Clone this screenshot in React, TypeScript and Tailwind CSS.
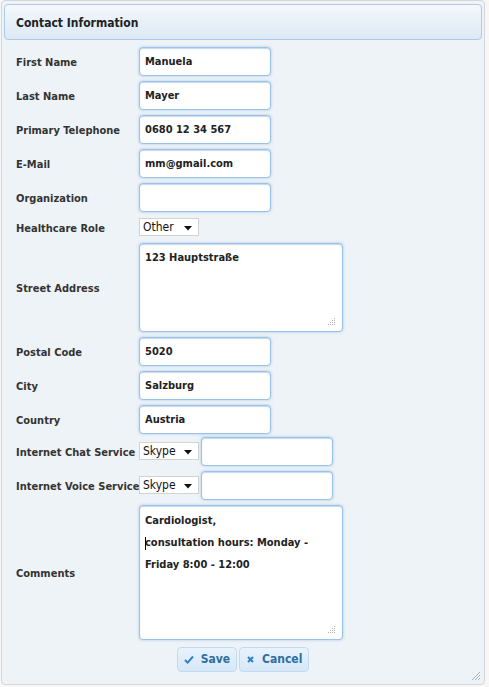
import React from 'react';

const font = {
  fontFamily: '"DejaVu Sans Condensed", "DejaVu Sans", "Liberation Sans", sans-serif',
  fontStretch: 'condensed',
};

const Grip = () => (
  <svg className="absolute bottom-[5px] right-[6px]" width="8" height="8" viewBox="0 0 8 8">
    <rect x="6" y="0" width="1" height="1" fill="#b5b5b5" />
    <rect x="4" y="2" width="1" height="1" fill="#b5b5b5" />
    <rect x="6" y="2" width="1" height="1" fill="#b5b5b5" />
    <rect x="2" y="4" width="1" height="1" fill="#b5b5b5" />
    <rect x="4" y="4" width="1" height="1" fill="#b5b5b5" />
    <rect x="6" y="4" width="1" height="1" fill="#b5b5b5" />
    <rect x="0" y="6" width="1" height="1" fill="#b5b5b5" />
    <rect x="2" y="6" width="1" height="1" fill="#b5b5b5" />
    <rect x="4" y="6" width="1" height="1" fill="#b5b5b5" />
    <rect x="6" y="6" width="1" height="1" fill="#b5b5b5" />
  </svg>
);

const field =
  'bg-white border border-[#9cc3e6] rounded-[4px] shadow-[0_0_3px_rgba(110,165,220,0.55),inset_0_1px_1px_rgba(90,150,210,0.35)]';

const TextInput = ({ value = '', w = 'w-[132px]' }: { value?: string; w?: string }) => (
  <div className={`${field} ${w} h-[29px] flex items-center px-[5px] pt-[2px] text-[11px] font-bold text-[#222]`}>
    {value}
  </div>
);

const Select = ({ value }: { value: string }) => (
  <div className="w-[60px] h-[18px] bg-white border border-[#d2d2d2] flex items-center justify-between pl-[3px] pr-[6px] text-[12px] text-[#111]">
    <span className="leading-none">{value}</span>
    <svg width="8" height="5" viewBox="0 0 8 5" className="mt-[3px]">
      <path d="M0 0h8L4 4.5z" fill="#111" />
    </svg>
  </div>
);

const Label = ({ children }: { children: React.ReactNode }) => (
  <div className="w-[123px] shrink-0 pt-[4px] text-[11px] font-bold text-[#333] whitespace-nowrap">{children}</div>
);

const Row = ({ label, children, cls = '' }: { label: string; children: React.ReactNode; cls?: string }) => (
  <div className={`flex items-center ${cls}`}>
    <Label>{label}</Label>
    {children}
  </div>
);

const btn =
  'h-[25px] px-[6px] flex items-center gap-[7px] rounded-[4px] border border-[#c2daef] bg-gradient-to-b from-[#e8f2fc] to-[#d6e8f8] text-[12px] font-bold text-[#2e6e9e]';

export default function App() {
  return (
    <div className="w-[489px] h-[687px] bg-[#f7f7f7] relative" style={font}>
      <div className="absolute left-[1px] top-0 w-[484px] h-[685px] bg-[#eef3f7] border border-[#d6d6d6] rounded-[4px] flex flex-col px-[2px] pt-[3px]">
        {/* Title bar */}
        <div className="h-[36px] rounded-[4px] border border-[#a9cbe8] bg-gradient-to-b from-[#f4f8fb] to-[#dce9f5] flex items-center pl-[11px] pt-[1px] text-[12px] font-bold text-[#222]">
          Contact Information
        </div>

        {/* Form */}
        <div className="flex flex-col pl-[12px] pt-[7px]">
          <div className="flex flex-col gap-[5px]">
            <Row label="First Name"><TextInput value="Manuela" /></Row>
            <Row label="Last Name"><TextInput value="Mayer" /></Row>
            <Row label="Primary Telephone"><TextInput value="0680 12 34 567" /></Row>
            <Row label="E-Mail"><TextInput value="mm@gmail.com" /></Row>
            <Row label="Organization"><TextInput /></Row>
          </div>
          <Row label="Healthcare Role" cls="mt-[5px]"><Select value="Other" /></Row>
          <Row label="Street Address" cls="mt-[5px]">
            <div className={`${field} relative w-[204px] h-[89px] px-[5px] pt-[6px] text-[11px] font-bold text-[#222]`}>
              123 Hauptstraße
              <Grip />
            </div>
          </Row>
          <div className="flex flex-col gap-[5px] mt-[5px]">
            <Row label="Postal Code"><TextInput value="5020" /></Row>
            <Row label="City"><TextInput value="Salzburg" /></Row>
            <Row label="Country"><TextInput value="Austria" /></Row>
            <Row label="Internet Chat Service" cls="mt-[-2px]">
              <Select value="Skype" />
              <div className="ml-[2px]"><TextInput /></div>
            </Row>
            <Row label="Internet Voice Service">
              <Select value="Skype" />
              <div className="ml-[2px]"><TextInput /></div>
            </Row>
            <Row label="Comments">
              <div className={`${field} relative w-[204px] h-[135px] px-[5px] pt-[4px] text-[11px] font-bold text-[#222] leading-[22px]`}>
                <div>Cardiologist,</div>
                <div className="relative">
                  <span className="absolute left-0 top-[5px] w-px h-[13px] bg-black" />
                  consultation hours: Monday -
                </div>
                <div>Friday 8:00 - 12:00</div>
                <Grip />
              </div>
            </Row>
          </div>
        </div>

        {/* Buttons */}
        <div className="flex justify-center gap-[2px] mt-[7px]">
          <button className={btn}>
            <svg width="10" height="9" viewBox="0 0 10 9">
              <path d="M1 5l2.6 2.6L9 1.5" stroke="#2e82c4" strokeWidth="2" fill="none" />
            </svg>
            Save
          </button>
          <button className={btn}>
            <svg width="9" height="9" viewBox="0 0 9 9">
              <path d="M2 2l5 5M7 2l-5 5" stroke="#2e82c4" strokeWidth="2" fill="none" />
            </svg>
            Cancel
          </button>
        </div>

        {/* Resize handle */}
        <svg className="absolute right-[3px] bottom-[3px]" width="10" height="10" viewBox="0 0 10 10">
          <path d="M9 1L1 9M9 4L4 9M9 7L7 9" stroke="#9fb6cc" strokeWidth="1" />
        </svg>
      </div>
    </div>
  );
}
